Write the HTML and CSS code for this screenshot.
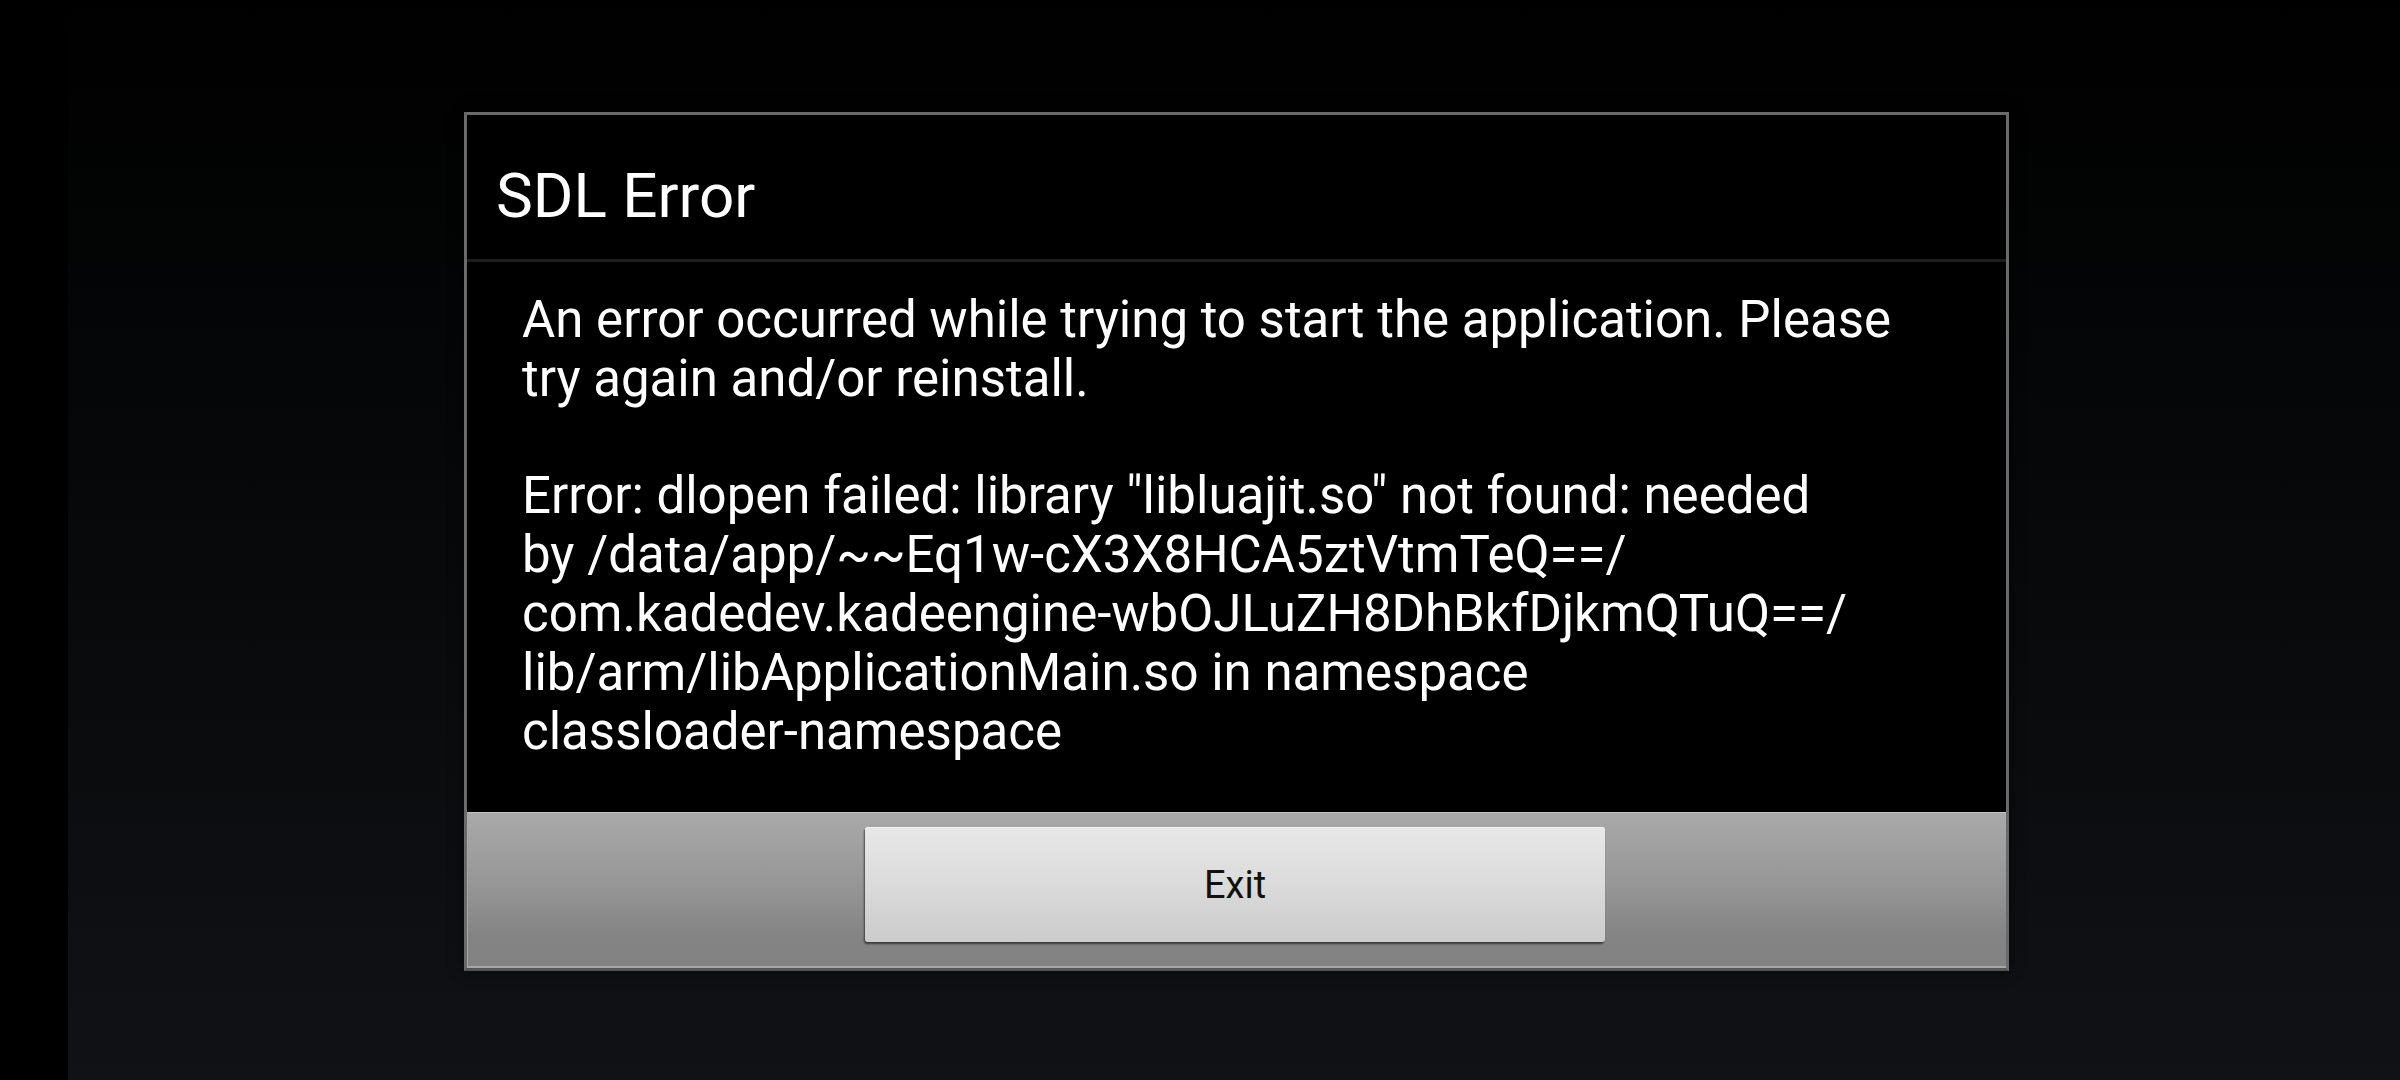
FILE: index.html
```html
<!DOCTYPE html>
<html>
<head>
<meta charset="utf-8">
<link rel="stylesheet" href="styles.css">
</head>
<body>
<div class="screen">
  <div class="edge"></div>
  <div class="stage">
    <div class="dialog">
      <div class="title">SDL Error</div>
      <div class="message">An error occurred while trying to start the application. Please<br>try again and/or reinstall.<br><br>Error: dlopen failed: library "libluajit.so" not found: needed<br>by /data/app/~~Eq1w-cX3X8HCA5ztVtmTeQ==/<br>com.kadedev.kadeengine-wbOJLuZH8DhBkfDjkmQTuQ==/<br>lib/arm/libApplicationMain.so in namespace<br>classloader-namespace</div>
      <div class="footer">
        <button class="btn">Exit</button>
      </div>
    </div>
  </div>
</div>
</body>
</html>
```
FILE: styles.css
```css
html, body {
  margin: 0;
  padding: 0;
  background: #000;
}
.screen {
  display: flex;
  width: 2400px;
  height: 1080px;
  overflow: hidden;
  font-family: Roboto, "Noto Sans", sans-serif;
}
.edge {
  width: 68px;
  flex: none;
  background: #000;
}
.stage {
  flex: 1;
  background: linear-gradient(to bottom, #000 0%, #050607 35%, #0b0c0e 70%, #101215 100%);
  padding: 112px 0 0 396px;
  box-sizing: border-box;
}
.dialog {
  width: 1545px;
  box-sizing: border-box;
  border: 3px solid #6a6a6a;
  border-bottom-color: #555;
  background: #000;
  display: flex;
  flex-direction: column;
  box-shadow: 0 0 12px rgba(0,0,0,0.6);
}
.title {
  color: #fff;
  font-size: 62px;
  line-height: 73px;
  padding: 44px 0 0 29px;
  height: 147px;
  box-sizing: border-box;
  border-bottom: 3px solid #1e1e1e;
}
.message {
  color: #fff;
  font-size: 51px;
  line-height: 58.8px;
  padding: 29px 30px 0 55px;
  height: 550px;
  box-sizing: border-box;
}
.footer {
  height: 156px;
  box-sizing: border-box;
  background: linear-gradient(to bottom, #a9a9a9 0%, #979797 45%, #848484 80%, #828282 100%);
  border-top: 1px solid #c2c2c2;
  border-left: 1px solid #a8a8a8;
  border-bottom: 2px solid #a6a6a6;
  display: flex;
  justify-content: center;
  padding-top: 14px;
}
.btn {
  width: 740px;
  height: 115px;
  margin-left: -4px;
  border: none;
  border-radius: 3px;
  background: linear-gradient(to bottom, #e8e8e8 0%, #dcdcdc 45%, #cbcbcb 100%);
  box-shadow: 0 1px 0 #f2f2f2 inset, -1px 2px 2px rgba(0,0,0,0.55);
  font-family: Roboto, "Noto Sans", sans-serif;
  font-size: 38px;
  color: #111;
  padding: 0;
  cursor: default;
}
```
